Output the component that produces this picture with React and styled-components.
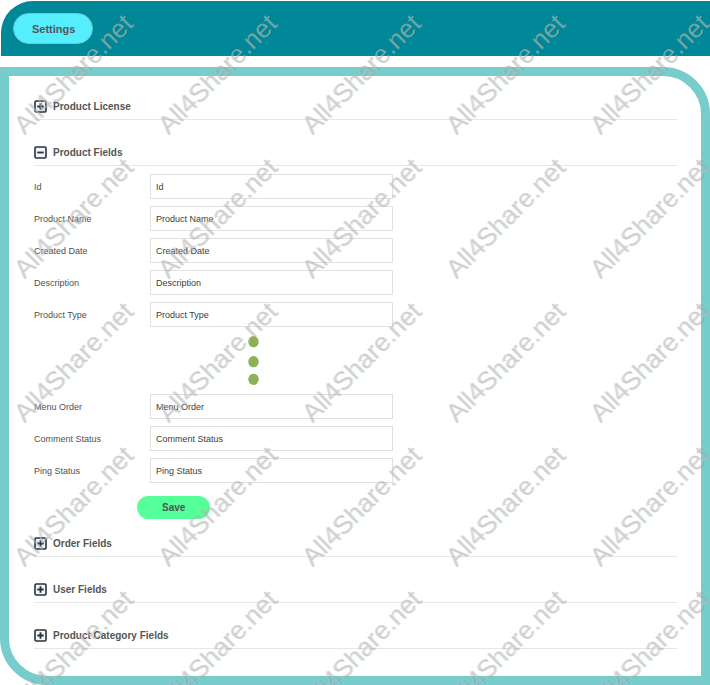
import React, { useId, useState } from "react";
import styled, { createGlobalStyle } from "styled-components";

const GlobalStyle = createGlobalStyle`
  *, *::before, *::after { box-sizing: border-box; }
  body {
    margin: 0;
    background: #ffffff;
    color: #444444;
    font-family: "Liberation Sans", Arial, sans-serif;
  }
  button, input { font-family: inherit; }
`;

const Page = styled.div`
  position: relative;
  display: flex;
  flex-direction: column;
  gap: 11px;
  padding-top: 1px;
  overflow: hidden;
`;

const TopBar = styled.header`
  display: flex;
  align-items: center;
  margin-left: 1px;
  padding: 12px;
  background: #008899;
  border-top-left-radius: 32px;
`;

const SettingsButton = styled.button`
  height: 31px;
  padding: 0 17px 0 18px;
  border: 1px solid #6cc5cf;
  border-radius: 16px;
  background: #55eeff;
  color: #555555;
  font-size: 11px;
  font-weight: 700;
  cursor: pointer;
`;

const Panel = styled.main`
  display: flex;
  flex-direction: column;
  gap: 22px;
  padding: 20px 24px 27px 25px;
  border: 9px solid #77cccc;
  border-top-right-radius: 47px;
  border-bottom-left-radius: 47px;
`;

const SectionHeading = styled.h2`
  margin: 0;
  border-bottom: 1px solid #e6e6e6;
  font-size: 10px;
`;

const SectionToggle = styled.button`
  display: flex;
  align-items: center;
  gap: 6px;
  width: 100%;
  padding: 4px 0 6px;
  border: 0;
  background: none;
  color: #555555;
  font-size: 10px;
  font-weight: 700;
  line-height: 13px;
  text-align: left;
  cursor: pointer;
`;

const ToggleIcon = styled.svg`
  flex: none;
  width: 13px;
  height: 13px;
`;

const FieldsForm = styled.form`
  display: flex;
  flex-direction: column;
  align-items: flex-start;
  padding-top: 8px;
  margin-bottom: -8px;
`;

const FieldGroup = styled.div`
  display: flex;
  flex-direction: column;
  gap: 7px;
  width: 100%;
`;

const FieldRow = styled.div`
  display: grid;
  grid-template-columns: 116px minmax(0, 243px);
  align-items: center;
`;

const FieldLabel = styled.label`
  color: #505050;
  font-size: 9px;
  line-height: 12px;
`;

const FieldInput = styled.input`
  width: 100%;
  height: 25px;
  padding: 0 5px;
  border: 1px solid #e0e0e0;
  background: transparent;
  color: #404040;
  font-size: 9px;
`;

const MoreDots = styled.svg`
  width: 11px;
  height: 50px;
  margin: 9px 0 8px 214px;
`;

const SaveButton = styled.button`
  height: 23px;
  margin: 13px 0 0 103px;
  padding: 0 25px;
  border: 0;
  border-radius: 12px;
  background: #55ff99;
  color: #4d5550;
  font-size: 10px;
  font-weight: 700;
  cursor: pointer;
`;

const WatermarkLayer = styled.div`
  position: absolute;
  inset: 2px 0 0 1px;
  display: grid;
  grid-template-columns: repeat(auto-fill, 144px);
  grid-auto-rows: 144px;
  width: calc(100% + 144px);
  pointer-events: none;
  user-select: none;
`;

const WatermarkTile = styled.span`
  display: grid;
  place-content: center;
  color: rgba(190, 192, 192, 0.6);
  font-size: 26px;
  line-height: 26px;
  text-shadow: 1px 1px 0 rgba(0, 0, 0, 0.1);
  transform: rotate(-45deg);
`;

const leadingFields = ["Id", "Product Name", "Created Date", "Description", "Product Type"];
const trailingFields = ["Menu Order", "Comment Status", "Ping Status"];

function Field({ name }) {
  const id = useId();
  return (
    <FieldRow>
      <FieldLabel htmlFor={id}>{name}</FieldLabel>
      <FieldInput id={id} type="text" defaultValue={name} />
    </FieldRow>
  );
}

function Section({ title, initiallyOpen = false, children }) {
  const [open, setOpen] = useState(initiallyOpen);
  return (
    <section>
      <SectionHeading>
        <SectionToggle type="button" aria-expanded={open} onClick={() => setOpen(!open)}>
          <ToggleIcon viewBox="0 0 13 13" fill="none" stroke="#27323c" aria-hidden="true">
            <rect x="1" y="1" width="11" height="11" rx="1.2" fill="#f1f5f7" strokeWidth="1.6" />
            <path d={open ? "M3.3 6.5h6.4" : "M3.3 6.5h6.4M6.5 3.3v6.4"} strokeWidth="1.8" />
          </ToggleIcon>
          {title}
        </SectionToggle>
      </SectionHeading>
      {open && children}
    </section>
  );
}

function Watermark() {
  return (
    <WatermarkLayer aria-hidden="true">
      {Array.from({ length: 25 }, (_, i) => (
        <WatermarkTile key={i}>All4Share.net</WatermarkTile>
      ))}
    </WatermarkLayer>
  );
}

export default function App() {
  return (
    <>
      <GlobalStyle />
      <Page>
        <TopBar>
          <SettingsButton type="button">Settings</SettingsButton>
        </TopBar>
        <Panel>
          <Section title="Product License" />
          <Section title="Product Fields" initiallyOpen>
            <FieldsForm onSubmit={(event) => event.preventDefault()}>
              <FieldGroup>
                {leadingFields.map((name) => (
                  <Field key={name} name={name} />
                ))}
              </FieldGroup>
              <MoreDots viewBox="0 0 11 50" fill="#8db255" aria-hidden="true">
                <ellipse cx="5.5" cy="5.7" rx="5.2" ry="5.6" />
                <ellipse cx="5.5" cy="25.7" rx="5.2" ry="5.6" />
                <ellipse cx="5.5" cy="43.3" rx="5.2" ry="5.6" />
              </MoreDots>
              <FieldGroup>
                {trailingFields.map((name) => (
                  <Field key={name} name={name} />
                ))}
              </FieldGroup>
              <SaveButton type="submit">Save</SaveButton>
            </FieldsForm>
          </Section>
          <Section title="Order Fields" />
          <Section title="User Fields" />
          <Section title="Product Category Fields" />
        </Panel>
        <Watermark />
      </Page>
    </>
  );
}
